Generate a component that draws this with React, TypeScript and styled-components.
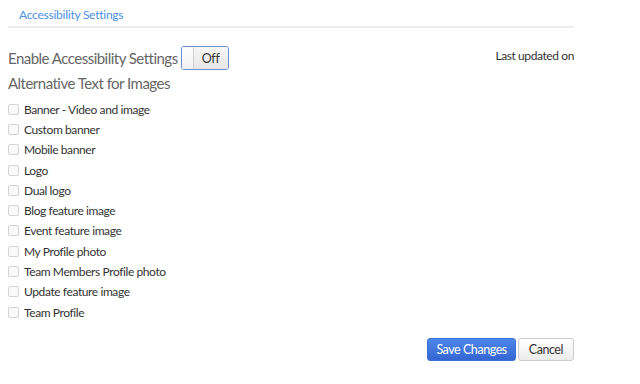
import React from "react";
import styled, { createGlobalStyle } from "styled-components";

const Global = createGlobalStyle`
  html, body { margin: 0; padding: 0; background: #fff; }
  body { font-family: Lato, "Open Sans", sans-serif; }
`;

const Page = styled.div`
  width: 566px;
  padding: 0 8px;
`;

const TabBar = styled.div`
  height: 26px;
  border-bottom: 2px solid #ececec;
  display: flex;
  align-items: center;
  padding-left: 11px;
`;

const TabLabel = styled.span`
  font-size: 12px;
  letter-spacing: -0.25px;
  color: #4a90e2;
  margin-top: 2px;
`;

const HeaderRow = styled.div`
  display: flex;
  align-items: center;
  justify-content: space-between;
  margin-top: 18px;
  height: 24px;
`;

const EnableGroup = styled.div`
  display: flex;
  align-items: center;
`;

const Heading = styled.div`
  font-size: 15px;
  letter-spacing: -0.52px;
  color: #666;
  font-weight: 400;
`;

const Toggle = styled.div`
  display: flex;
  width: 46px;
  height: 22px;
  border: 1px solid #6f8fcf;
  border-radius: 3px;
  overflow: hidden;
  margin-left: 3px;
  box-shadow: 0 0 1px rgba(80, 120, 200, 0.4);
`;

const Knob = styled.div`
  width: 11px;
  background: linear-gradient(#ffffff, #f1f1f1);
  border-right: 1px solid #cfcfcf;
`;

const ToggleText = styled.div`
  flex: 1;
  display: flex;
  align-items: center;
  justify-content: center;
  font-size: 12.5px;
  letter-spacing: -0.3px;
  color: #333;
  background: linear-gradient(#f7f7f7, #e6e6e6);
`;

const Updated = styled.div`
  font-size: 12px;
  letter-spacing: -0.4px;
  color: #333;
  margin-top: -6px;
`;

const SubHeading = styled(Heading)`
  margin-top: 3px;
  line-height: 20px;
`;

const List = styled.div`
  display: flex;
  flex-direction: column;
  margin-top: 6px;
`;

const Row = styled.label`
  display: flex;
  align-items: center;
  height: 20.3px;
  font-size: 12px;
  letter-spacing: -0.4px;
  color: #333;
`;

const Box = styled.span`
  width: 9px;
  height: 9px;
  border: 1px solid #d4d4d4;
  border-radius: 2px;
  background: #fafafa;
  margin-right: 5px;
`;

const Footer = styled.div`
  display: flex;
  justify-content: flex-end;
  gap: 2px;
  margin-top: 16px;
`;

const Button = styled.button<{ $primary?: boolean }>`
  height: 23px;
  font-family: Lato, sans-serif;
  font-size: 12.5px;
  letter-spacing: -0.45px;
  border-radius: 3px;
  padding: 0 ${(p) => (p.$primary ? "8px" : "10px")};
  cursor: pointer;
  border: 1px solid ${(p) => (p.$primary ? "#3a6fd8" : "#cccccc")};
  color: ${(p) => (p.$primary ? "#fff" : "#333")};
  background: ${(p) =>
    p.$primary
      ? "linear-gradient(#4d86e8, #3566d4)"
      : "linear-gradient(#ffffff, #ececec)"};
`;

const items = [
  "Banner - Video and image",
  "Custom banner",
  "Mobile banner",
  "Logo",
  "Dual logo",
  "Blog feature image",
  "Event feature image",
  "My Profile photo",
  "Team Members Profile photo",
  "Update feature image",
  "Team Profile",
];

export default function App() {
  return (
    <>
      <Global />
      <Page>
        <TabBar>
          <TabLabel>Accessibility Settings</TabLabel>
        </TabBar>
        <HeaderRow>
          <EnableGroup>
            <Heading>Enable Accessibility Settings</Heading>
            <Toggle>
              <Knob />
              <ToggleText>Off</ToggleText>
            </Toggle>
          </EnableGroup>
          <Updated>Last updated on</Updated>
        </HeaderRow>
        <SubHeading>Alternative Text for Images</SubHeading>
        <List>
          {items.map((t) => (
            <Row key={t}>
              <Box />
              {t}
            </Row>
          ))}
        </List>
        <Footer>
          <Button $primary>Save Changes</Button>
          <Button>Cancel</Button>
        </Footer>
      </Page>
    </>
  );
}
